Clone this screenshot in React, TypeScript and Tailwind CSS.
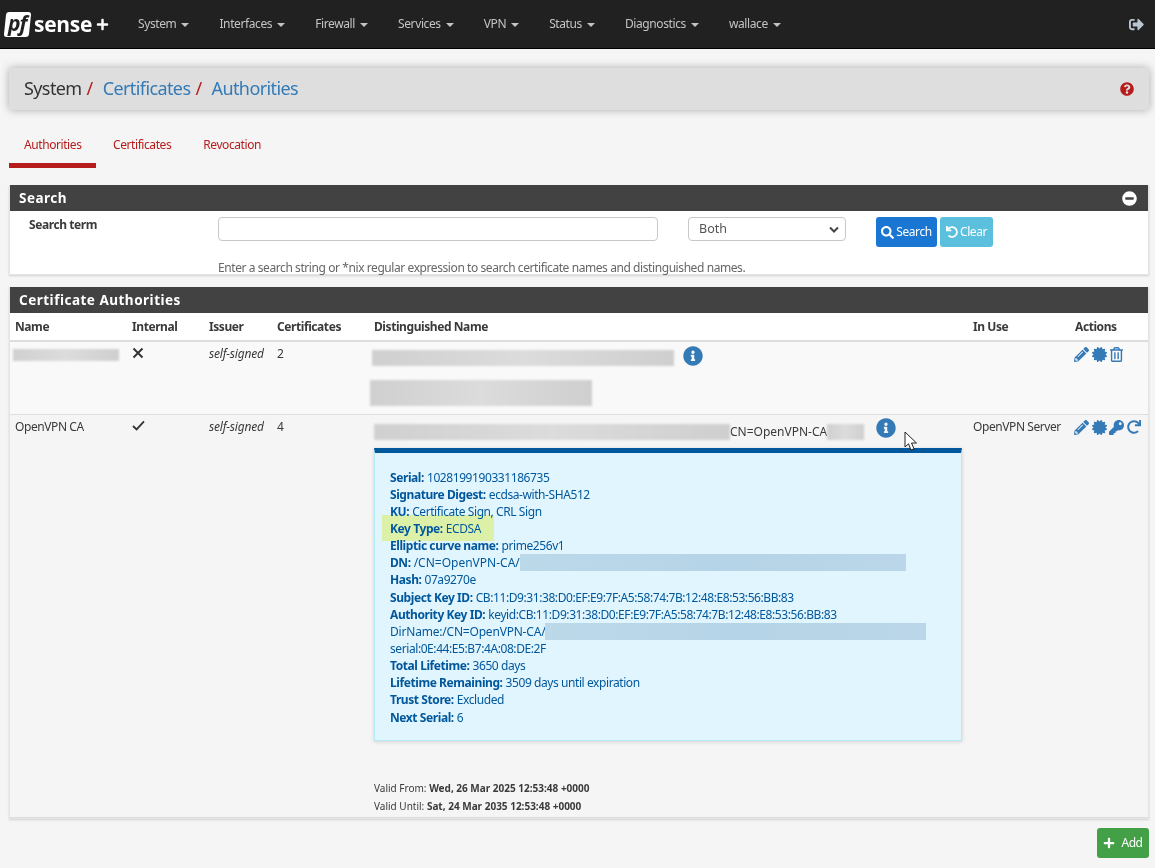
import React from "react";
import { FaCertificate, FaInfoCircle, FaKey, FaMinusCircle, FaPencilAlt, FaPlus, FaQuestionCircle, FaRedo, FaRegTrashAlt, FaSearch, FaUndo, FaSignOutAlt } from "react-icons/fa";

const navItems = ["System", "Interfaces", "Firewall", "Services", "VPN", "Status", "Diagnostics", "wallace"];

function Logo() {
  return (
    <div className="flex items-center ml-[5px] w-[118px] h-[48px] tracking-normal">
      <div className="w-[25px] h-[25px] bg-white rounded-[3px] -skew-x-6 flex items-center justify-center shrink-0">
        <span className="skew-x-6 italic font-bold text-[21px] leading-none text-[#222] tracking-[-1px] -mt-[3px] font-['Open_Sans',sans-serif]">pf</span>
      </div>
      <span className="text-white font-bold text-[21px] leading-none tracking-[-0.3px] ml-[4px] font-['Open_Sans',sans-serif]">sense</span>
      <FaPlus className="text-white text-[13px] ml-[4px] mt-[1px]" />
    </div>
  );
}

function Blur({ className }: { className: string }) {
  return <div className={"bg-gradient-to-r from-[#d0d0d0] via-[#dcdcdc] to-[#cfcfcf] blur-[1px] " + className} />;
}

function BlueBlur({ className }: { className: string }) {
  return <div className={"h-[17px] bg-gradient-to-r from-[#bcd9ea] via-[#b6d4e7] to-[#bad6e8] blur-[0.5px] " + className} />;
}

function Line({ k, v, vClass, children }: { k?: string; v?: string; vClass?: string; children?: React.ReactNode }) {
  return (
    <div className="h-[17.15px] leading-[17px] whitespace-nowrap flex items-center">
      {k && <b className="font-bold mr-[3px]">{k}</b>}
      {v && <span className={vClass}>{v}</span>}
      {children}
    </div>
  );
}

function Panel({ title, right, children }: { title: string; right?: React.ReactNode; children: React.ReactNode }) {
  return (
    <section className="ml-[9px] mr-[6px] border border-[#e4e4e4] border-t-0 shadow-[0_1px_2px_rgba(0,0,0,0.15)]">
      <div className="h-[26px] bg-[#424242] text-white font-bold text-[13.5px] tracking-[0.5px] pl-[9px] pr-[11px] flex items-center justify-between">
        <span>{title}</span>
        {right}
      </div>
      {children}
    </section>
  );
}

function CursorIcon() {
  return (
    <svg className="absolute left-[904px] top-[431px]" width="15" height="21" viewBox="0 0 15 21">
      <path d="M1 1 L1 16 L4.5 12.8 L7 19 L10 17.8 L7.5 12 L12.5 12 Z" fill="#fff" stroke="#222" strokeWidth="1" />
    </svg>
  );
}

function XMark() {
  return (
    <svg width="12" height="12" viewBox="0 0 12 12"><path d="M1.5 1.5 L10.5 10.5 M10.5 1.5 L1.5 10.5" stroke="#333" strokeWidth="1.9" fill="none" /></svg>
  );
}

function CheckMark() {
  return (
    <svg width="13" height="11" viewBox="0 0 13 11"><path d="M1 6 L4.6 9.4 L12 1.4" stroke="#333" strokeWidth="1.8" fill="none" /></svg>
  );
}

export default function App() {
  return (
    <div className="relative w-[1155px] h-[868px] overflow-hidden bg-[#f5f5f5] text-[12px] tracking-[-0.42px] text-[#3a3a3a] font-['Noto_Sans',sans-serif]">
      <nav className="h-[49px] bg-[#212121] border-b border-black flex items-center">
        <Logo />
        <ul className="flex text-[#c4c4c4] tracking-[-0.39px]">
          {navItems.map((n) => (
            <li key={n} className="px-[15px] flex items-center whitespace-nowrap">
              {n}
              <span className="ml-[5px] mt-[2px] border-x-[4px] border-x-transparent border-t-[4px] border-t-[#c4c4c4]" />
            </li>
          ))}
        </ul>
        <FaSignOutAlt className="ml-auto mr-[11px] text-[#b9c6d2] text-[15px]" />
      </nav>

      <header className="ml-[9px] mr-[6px] mt-[19px] h-[42px] bg-[#dedede] rounded-[2px] shadow-[0_0_8px_rgba(0,0,0,0.3)] flex items-center pl-[15px] pr-[15px] pb-[2px] text-[18px] tracking-[-0.6px]">
        <span className="text-[#333]">System</span>
        <span className="text-[#b71c1c] ml-[5px] mr-[10px]">/</span>
        <span className="text-[#337ab7]">Certificates</span>
        <span className="text-[#b71c1c] ml-[5px] mr-[10px]">/</span>
        <span className="text-[#337ab7]">Authorities</span>
        <FaQuestionCircle className="ml-auto mt-[2px] text-[#b71c1c] text-[14px]" />
      </header>

      <div className="flex mx-[9px] mt-[18px] h-[40px] text-[#b71c1c]">
        <div className="w-[87px] pl-[15px] pt-[8px] border-b-[5px] border-[#b71c1c]">Authorities</div>
        <div className="pl-[17px] pt-[8px]">Certificates</div>
        <div className="pl-[32px] pt-[8px]">Revocation</div>
      </div>

      <div className="mt-[17px]">
        <Panel title="Search" right={<FaMinusCircle className="text-white text-[15px]" />}>
          <div className="relative h-[63px] bg-white flex items-start">
            <b className="w-[208px] pl-[19px] pt-[5px] font-bold">Search term</b>
            <div className="w-[440px] h-[24px] mt-[6px] bg-white border border-[#c8c8c8] rounded-[4px]" />
            <div className="ml-[30px] w-[158px] h-[24px] mt-[6px] border border-[#c8c8c8] rounded-[4px] flex items-center justify-between pl-[10px] pr-[6px] text-[#555] text-[12.5px] tracking-normal">
              <span>Both</span>
              <svg width="10" height="7" viewBox="0 0 10 7"><path d="M1 1.5 L5 5.5 L9 1.5" fill="none" stroke="#444" strokeWidth="2" /></svg>
            </div>
            <button className="ml-[30px] mt-[6px] w-[61px] h-[30px] bg-[#1976d2] rounded-[3px] text-white flex items-center justify-center gap-[2px]">
              <FaSearch className="text-[13px]" />Search
            </button>
            <button className="ml-[3px] mt-[6px] w-[53px] h-[30px] bg-[#5bc0de] rounded-[3px] text-white flex items-center justify-center gap-[2px]">
              <FaUndo className="text-[12px]" />Clear
            </button>
            <span className="absolute left-[208px] top-[48px] text-[#666]">Enter a search string or *nix regular expression to search certificate names and distinguished names.</span>
          </div>
        </Panel>
      </div>

      <div className="mt-[12px]">
        <Panel title="Certificate Authorities">
          <table className="w-[1138px] table-fixed border-collapse">
            <colgroup>
              <col className="w-[117px]" />
              <col className="w-[77px]" />
              <col className="w-[68px]" />
              <col className="w-[97px]" />
              <col className="w-[599px]" />
              <col className="w-[102px]" />
              <col />
            </colgroup>
            <thead className="bg-white">
              <tr className="h-[28px] border-b-2 border-[#ddd] text-left">
                {["Name", "Internal", "Issuer", "Certificates", "Distinguished Name", "In Use", "Actions"].map((h) => (
                  <th key={h} className="font-bold pl-[5px] py-0">{h}</th>
                ))}
              </tr>
            </thead>
            <tbody>
              <tr className="h-[73px] bg-[#f9f9f9] border-b border-[#ddd] align-top">
                <td className="pl-[3px] pt-[7px]"><Blur className="w-[106px] h-[12px]" /></td>
                <td className="pl-[5px] pt-[5px]"><XMark /></td>
                <td className="pl-[5px] pt-[3px] italic tracking-[-0.2px]">self-signed</td>
                <td className="pl-[5px] pt-[3px]">2</td>
                <td className="pl-[3px] pt-[4px]">
                  <div className="flex items-center">
                    <Blur className="w-[302px] h-[16px] mt-[4px]" />
                    <FaInfoCircle className="ml-[9px] text-[#337ab7] text-[20px]" />
                  </div>
                  <Blur className="w-[222px] h-[26px] mt-[14px] -ml-[2px]" />
                </td>
                <td />
                <td className="pl-[4px] pt-[5px]">
                  <div className="flex items-center gap-[2.5px] text-[#337ab7] text-[15px]">
                    <FaPencilAlt /><FaCertificate /><FaRegTrashAlt />
                  </div>
                </td>
              </tr>
              <tr className="h-[403px] bg-[#f5f5f5] border-b border-[#ddd] align-top">
                <td className="pl-[5px] pt-[3px]">OpenVPN CA</td>
                <td className="pl-[5px] pt-[5px]"><CheckMark /></td>
                <td className="pl-[5px] pt-[3px] italic tracking-[-0.2px]">self-signed</td>
                <td className="pl-[5px] pt-[3px]">4</td>
                <td className="pl-[5px] pt-[3px]">
                  <div className="flex items-center h-[20px]">
                    <Blur className="w-[356px] h-[16px] mt-[8px]" />
                    <span className="w-[97px] mt-[8px] tracking-normal whitespace-nowrap">CN=OpenVPN-CA</span>
                    <Blur className="w-[37px] h-[16px] mt-[8px]" />
                    <FaInfoCircle className="ml-[12px] text-[#337ab7] text-[20px]" />
                  </div>
                  <div className="mt-[10px] w-[588px] h-[293px] bg-[#e1f5fe] border border-[#b2ebf2] border-t-[5px] border-t-[#01579b] shadow-[0_1px_4px_rgba(0,0,0,0.15)] text-[#01579b] pl-[15px] pt-[16px]">
                    <Line k="Serial:" v="1028199190331186735" />
                    <Line k="Signature Digest:" v="ecdsa-with-SHA512" />
                    <Line k="KU:" v="Certificate Sign, CRL Sign" />
                    <Line k="Key Type:" v="ECDSA" />
                    <Line k="Elliptic curve name:" v="prime256v1" />
                    <Line k="DN:" v="/CN=OpenVPN-CA/" vClass="tracking-normal"><BlueBlur className="w-[386px]" /></Line>
                    <Line k="Hash:" v="07a9270e" />
                    <Line k="Subject Key ID:" v="CB:11:D9:31:38:D0:EF:E9:7F:A5:58:74:7B:12:48:E8:53:56:BB:83" />
                    <Line k="Authority Key ID:" v="keyid:CB:11:D9:31:38:D0:EF:E9:7F:A5:58:74:7B:12:48:E8:53:56:BB:83" />
                    <Line v="DirName:/CN=OpenVPN-CA/" vClass="tracking-[-0.2px]"><BlueBlur className="w-[381px]" /></Line>
                    <Line v="serial:0E:44:E5:B7:4A:08:DE:2F" />
                    <Line k="Total Lifetime:" v="3650 days" />
                    <Line k="Lifetime Remaining:" v="3509 days until expiration" />
                    <Line k="Trust Store:" v="Excluded" />
                    <Line k="Next Serial:" v="6" />
                  </div>
                  <div className="mt-[38px] text-[10px] leading-[18px] tracking-normal">
                    <div>Valid From: <b className="font-bold">Wed, 26 Mar 2025 12:53:48 +0000</b></div>
                    <div>Valid Until: <b className="font-bold">Sat, 24 Mar 2035 12:53:48 +0000</b></div>
                  </div>
                </td>
                <td className="pl-[5px] pt-[3px] whitespace-nowrap">OpenVPN Server</td>
                <td className="pl-[4px] pt-[5px]">
                  <div className="flex items-center gap-[2.5px] text-[#337ab7] text-[15px]">
                    <FaPencilAlt /><FaCertificate /><FaKey /><FaRedo className="text-[14px]" />
                  </div>
                </td>
              </tr>
            </tbody>
          </table>
        </Panel>
      </div>

      <div className="flex justify-end mr-[6px] mt-[9px]">
        <button className="w-[52px] h-[30px] bg-[#43a047] rounded-[3px] text-white flex items-center justify-center gap-[6px]">
          <FaPlus className="text-[12px]" />Add
        </button>
      </div>

      <div className="absolute left-[382px] top-[515px] w-[112px] h-[26px] bg-[#dcf0a8] mix-blend-darken" />
      <CursorIcon />
    </div>
  );
}
